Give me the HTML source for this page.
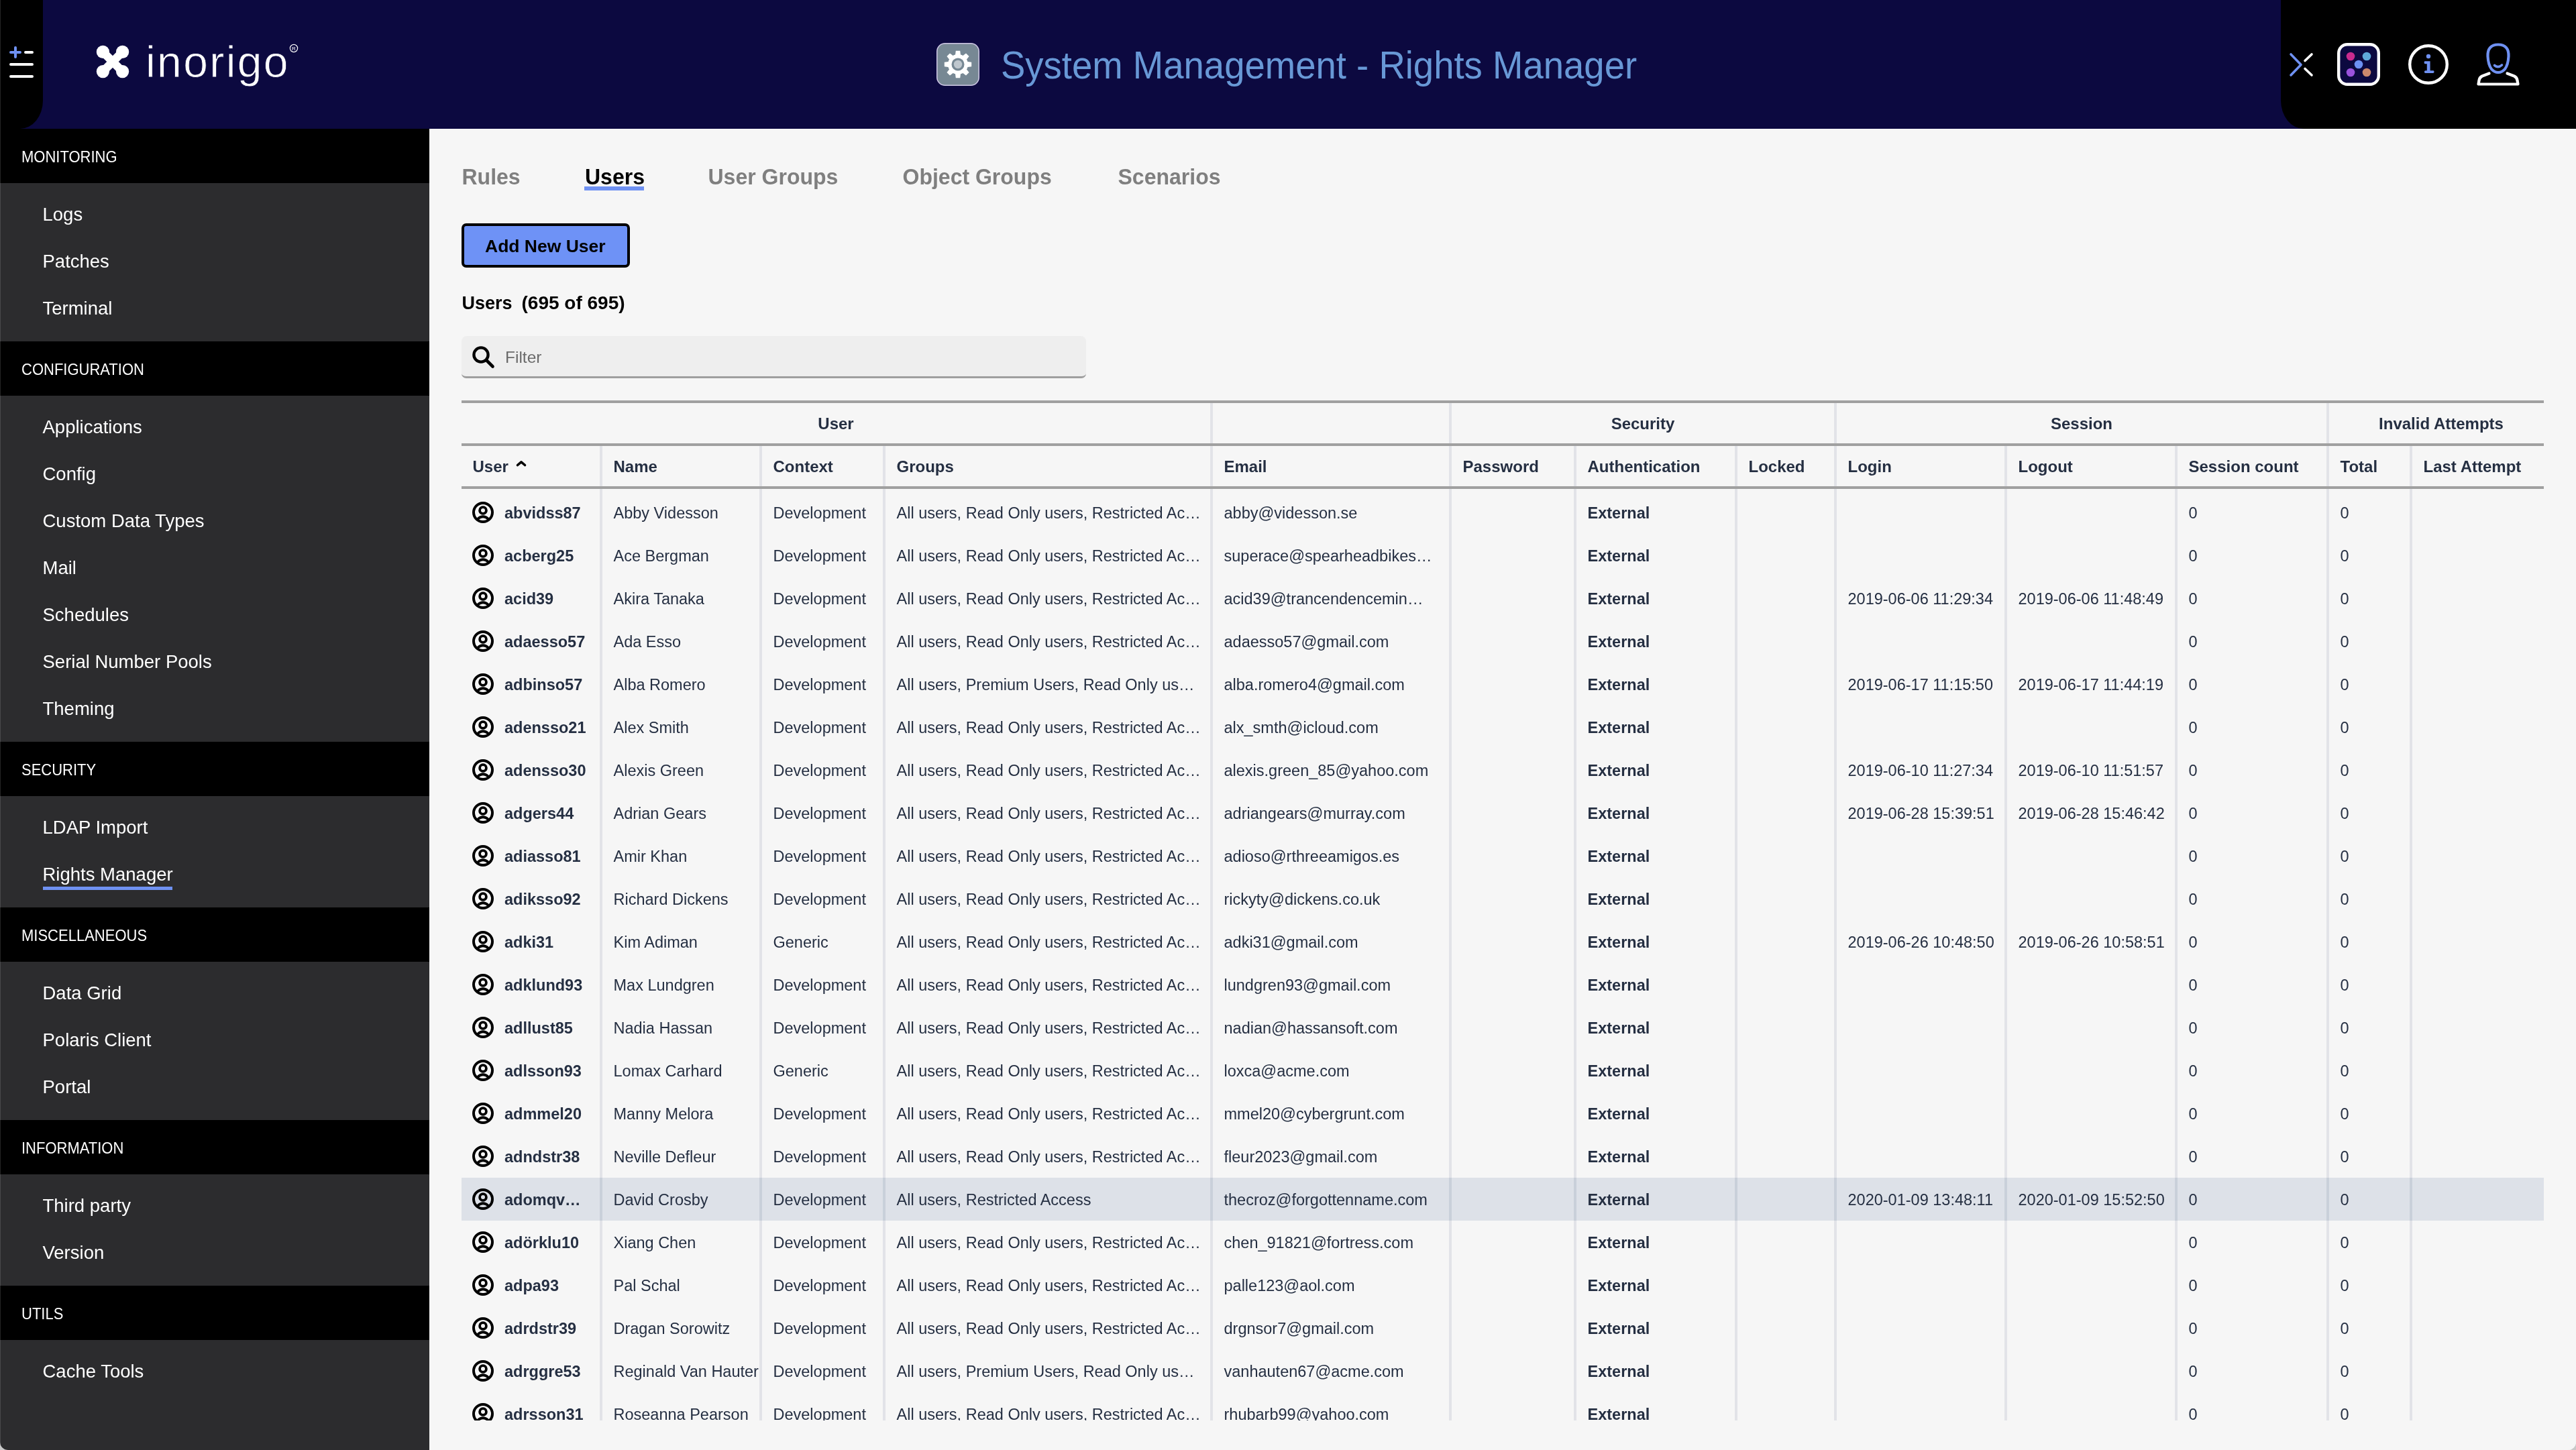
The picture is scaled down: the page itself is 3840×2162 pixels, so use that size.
<!DOCTYPE html>
<html><head><meta charset="utf-8"><title>System Management - Rights Manager</title>
<style>
html,body{margin:0;padding:0;}
body{width:3840px;height:2162px;overflow:hidden;position:relative;background:#c9c9c9;font-family:"Liberation Sans",sans-serif;}
.r{position:absolute;}
.t{position:absolute;white-space:nowrap;}
</style></head><body>
<div id="app" style="position:absolute;left:0;top:0;width:3840px;height:2162px;will-change:transform;overflow:hidden;border-radius:0 0 12px 12px;background:#f6f6f6">
<div class="r" style="left:0px;top:0px;width:3840px;height:192px;background:#0c0940;"></div>
<div class="r" style="left:0px;top:0px;width:64px;height:192px;background:#000;border-bottom-right-radius:34px 42px;"></div>
<div class="r" style="left:3400px;top:0px;width:440px;height:192px;background:#000;border-bottom-left-radius:34px 42px;"></div>
<svg class="r" style="left:0;top:0" width="64" height="192" viewBox="0 0 64 192">
<g stroke-linecap="round" stroke-width="4" fill="none">
<path d="M16 78H30M23 71V85" stroke="#6f91f2"/>
<path d="M38 78H48M16 96H48M16 114H48" stroke="#fff"/>
</g></svg>
<svg class="r" style="left:140px;top:64px" width="56" height="56" viewBox="0 0 56 56">
<g fill="#fff">
<circle cx="13.4" cy="13.4" r="9.6"/><circle cx="42.6" cy="13.4" r="9.6"/>
<circle cx="13.4" cy="42.6" r="9.6"/><circle cx="42.6" cy="42.6" r="9.6"/>
<path d="M13.4 13.4L42.6 42.6M42.6 13.4L13.4 42.6" stroke="#fff" stroke-width="12.5"/>
</g></svg>
<div class="t " style="left:217.0px;top:59.13px;font-size:66px;line-height:66px;color:#fff;letter-spacing:2.4px;-webkit-text-stroke:0.8px #0c0940;">inorigo</div>
<svg class="r" style="left:430px;top:64px" width="16" height="16" viewBox="0 0 16 16">
<circle cx="8" cy="8" r="5.6" fill="none" stroke="#fff" stroke-width="1.2"/>
<text x="8" y="10.8" font-size="8" font-family="Liberation Sans" fill="#fff" text-anchor="middle">R</text></svg>
<svg class="r" style="left:1396px;top:64px" width="64" height="64" viewBox="0 0 64 64">
<rect x="0.75" y="0.75" width="62.5" height="62.5" rx="12" fill="#778894" stroke="#cfc8e6" stroke-width="1.5"/>
<g transform="translate(32 32)" fill="#fff">
<path d="M-4.4 -11L-3.2 -20.2H3.2L4.4 -11Z" transform="rotate(0)"/>
<path d="M-4.4 -11L-3.2 -20.2H3.2L4.4 -11Z" transform="rotate(45)"/>
<path d="M-4.4 -11L-3.2 -20.2H3.2L4.4 -11Z" transform="rotate(90)"/>
<path d="M-4.4 -11L-3.2 -20.2H3.2L4.4 -11Z" transform="rotate(135)"/>
<path d="M-4.4 -11L-3.2 -20.2H3.2L4.4 -11Z" transform="rotate(180)"/>
<path d="M-4.4 -11L-3.2 -20.2H3.2L4.4 -11Z" transform="rotate(225)"/>
<path d="M-4.4 -11L-3.2 -20.2H3.2L4.4 -11Z" transform="rotate(270)"/>
<path d="M-4.4 -11L-3.2 -20.2H3.2L4.4 -11Z" transform="rotate(315)"/>
<circle r="15"/>
</g>
<circle cx="32" cy="32" r="9.5" fill="#778894"/>
<circle cx="32" cy="32" r="6.2" fill="#bfc7ce"/>
</svg>
<div class="t " style="left:1492.0px;top:71.87px;font-size:54.5px;line-height:54.5px;color:#6898d6;transform:scaleY(1.04);transform-origin:0 46.13px;">System Management - Rights Manager</div>
<svg class="r" style="left:3400px;top:60px" width="440" height="80" viewBox="3400 60 440 80">
<g fill="none" stroke-linecap="round" stroke-linejoin="round">
<path d="M3415 81L3430 96.5L3415 112" stroke="#6f91f2" stroke-width="3.6"/>
<path d="M3446 81L3436 90.5M3436 102.5L3446 112" stroke="#fff" stroke-width="3.6"/>
<rect x="3486.2" y="66.2" width="59.6" height="59.6" rx="13" fill="#0c0940" stroke="#fff" stroke-width="4.4"/>
<circle cx="3620" cy="96" r="27.8" stroke="#fff" stroke-width="4.4"/>
<path d="M3710 64.5" />
<path d="M3724 66.5C3713 66.5 3708 73 3708.5 84C3709 93 3711 99 3714 103C3717 106.5 3720.5 108 3724 108C3727.5 108 3731 106.5 3734 103C3737 99 3739 93 3739.5 84C3740 73 3735 66.5 3724 66.5Z" stroke="#6f91f2" stroke-width="4.2"/>
<path d="M3718.5 97.5Q3724 102 3729.5 97" stroke="#6f91f2" stroke-width="3.6"/>
<path d="M3710.5 109.5L3700 113.5Q3696 115.5 3695.5 120L3694.5 125.5H3753.5L3752.5 120Q3752 115.5 3748 113.5L3737.5 109.5" stroke="#fff" stroke-width="4.2"/>
</g>
<g>
<circle cx="3504" cy="84" r="6.3" fill="#c92b8e"/>
<circle cx="3528" cy="84" r="6.3" fill="#5fa9da"/>
<circle cx="3516" cy="96" r="6.3" fill="#6c90f2"/>
<circle cx="3504" cy="108" r="6.3" fill="#9a52dc"/>
<circle cx="3528" cy="108" r="6.3" fill="#cb886c"/>
<circle cx="3620" cy="84" r="3.2" fill="#6f91f2"/>
<path d="M3614.5 91.2H3622.6V105.2H3627.2Q3628.6 105.4 3628.6 107.2Q3628.4 109 3627 109H3615.6Q3614 109 3613.8 107.2Q3614 105.4 3615.6 105.2H3617.8V95.2H3615.2Q3613.6 95 3613.6 93.2Q3613.8 91.4 3614.5 91.2Z" fill="#6f91f2"/>
</g>
</svg>
<div class="r" style="left:0px;top:192px;width:640px;height:1970px;background:#2c2c2e;"></div>
<div class="r" style="left:0px;top:192px;width:640px;height:81px;background:#000;"></div>
<div class="t " style="left:32.0px;top:223.88px;font-size:22px;line-height:22px;color:#fff;transform:scaleY(1.12);transform-origin:0 18.62px;">MONITORING</div>
<div class="t " style="left:63.5px;top:306.22px;font-size:27.5px;line-height:27.5px;color:#fff;">Logs</div>
<div class="t " style="left:63.5px;top:376.22px;font-size:27.5px;line-height:27.5px;color:#fff;">Patches</div>
<div class="t " style="left:63.5px;top:446.22px;font-size:27.5px;line-height:27.5px;color:#fff;">Terminal</div>
<div class="r" style="left:0px;top:509px;width:640px;height:81px;background:#000;"></div>
<div class="t " style="left:32.0px;top:540.88px;font-size:22px;line-height:22px;color:#fff;transform:scaleY(1.12);transform-origin:0 18.62px;">CONFIGURATION</div>
<div class="t " style="left:63.5px;top:623.22px;font-size:27.5px;line-height:27.5px;color:#fff;">Applications</div>
<div class="t " style="left:63.5px;top:693.22px;font-size:27.5px;line-height:27.5px;color:#fff;">Config</div>
<div class="t " style="left:63.5px;top:763.22px;font-size:27.5px;line-height:27.5px;color:#fff;">Custom Data Types</div>
<div class="t " style="left:63.5px;top:833.22px;font-size:27.5px;line-height:27.5px;color:#fff;">Mail</div>
<div class="t " style="left:63.5px;top:903.22px;font-size:27.5px;line-height:27.5px;color:#fff;">Schedules</div>
<div class="t " style="left:63.5px;top:973.22px;font-size:27.5px;line-height:27.5px;color:#fff;">Serial Number Pools</div>
<div class="t " style="left:63.5px;top:1043.22px;font-size:27.5px;line-height:27.5px;color:#fff;">Theming</div>
<div class="r" style="left:0px;top:1106px;width:640px;height:81px;background:#000;"></div>
<div class="t " style="left:32.0px;top:1137.88px;font-size:22px;line-height:22px;color:#fff;transform:scaleY(1.12);transform-origin:0 18.62px;">SECURITY</div>
<div class="t " style="left:63.5px;top:1220.22px;font-size:27.5px;line-height:27.5px;color:#fff;">LDAP Import</div>
<div class="t " style="left:63.5px;top:1290.22px;font-size:27.5px;line-height:27.5px;color:#fff;">Rights Manager</div>
<div class="r" style="left:64px;top:1321.5px;width:193px;height:5px;background:#6f91f2;"></div>
<div class="r" style="left:0px;top:1353px;width:640px;height:81px;background:#000;"></div>
<div class="t " style="left:32.0px;top:1384.88px;font-size:22px;line-height:22px;color:#fff;transform:scaleY(1.12);transform-origin:0 18.62px;">MISCELLANEOUS</div>
<div class="t " style="left:63.5px;top:1467.22px;font-size:27.5px;line-height:27.5px;color:#fff;">Data Grid</div>
<div class="t " style="left:63.5px;top:1537.22px;font-size:27.5px;line-height:27.5px;color:#fff;">Polaris Client</div>
<div class="t " style="left:63.5px;top:1607.22px;font-size:27.5px;line-height:27.5px;color:#fff;">Portal</div>
<div class="r" style="left:0px;top:1670px;width:640px;height:81px;background:#000;"></div>
<div class="t " style="left:32.0px;top:1701.88px;font-size:22px;line-height:22px;color:#fff;transform:scaleY(1.12);transform-origin:0 18.62px;">INFORMATION</div>
<div class="t " style="left:63.5px;top:1784.22px;font-size:27.5px;line-height:27.5px;color:#fff;">Third party</div>
<div class="t " style="left:63.5px;top:1854.22px;font-size:27.5px;line-height:27.5px;color:#fff;">Version</div>
<div class="r" style="left:0px;top:1917px;width:640px;height:81px;background:#000;"></div>
<div class="t " style="left:32.0px;top:1948.88px;font-size:22px;line-height:22px;color:#fff;transform:scaleY(1.12);transform-origin:0 18.62px;">UTILS</div>
<div class="t " style="left:63.5px;top:2031.22px;font-size:27.5px;line-height:27.5px;color:#fff;">Cache Tools</div>
<div class="r" style="left:640px;top:192px;width:3200px;height:1970px;background:#f6f6f6;"></div>
<div class="t " style="left:688.5px;top:247.91px;font-size:32px;line-height:32px;font-weight:700;color:#7f7f7f;transform:scaleY(1.05);transform-origin:0 27.09px;">Rules</div>
<div class="t " style="left:872.0px;top:247.91px;font-size:32px;line-height:32px;font-weight:700;color:#000;transform:scaleY(1.05);transform-origin:0 27.09px;">Users</div>
<div class="t " style="left:1055.5px;top:247.91px;font-size:32px;line-height:32px;font-weight:700;color:#7f7f7f;transform:scaleY(1.05);transform-origin:0 27.09px;">User Groups</div>
<div class="t " style="left:1345.5px;top:247.91px;font-size:32px;line-height:32px;font-weight:700;color:#7f7f7f;transform:scaleY(1.05);transform-origin:0 27.09px;">Object Groups</div>
<div class="t " style="left:1666.5px;top:247.91px;font-size:32px;line-height:32px;font-weight:700;color:#7f7f7f;transform:scaleY(1.05);transform-origin:0 27.09px;">Scenarios</div>
<div class="r" style="left:871px;top:278px;width:89px;height:6px;background:#6f91f2;"></div>
<div class="r" style="left:688px;top:333px;width:251px;height:66px;box-sizing:border-box;border:4px solid #000;border-radius:7px;background:#6e92f6"></div>
<div class="t " style="left:723.0px;top:353.57px;font-size:26.5px;line-height:26.5px;font-weight:700;color:#000;">Add New User</div>
<div class="t " style="left:688.5px;top:439.14px;font-size:27px;line-height:27px;font-weight:700;color:#000;">Users</div>
<div class="t " style="left:777.5px;top:438.30px;font-size:28px;line-height:28px;font-weight:700;color:#000;">(695 of 695)</div>
<div class="r" style="left:688px;top:501px;width:931px;height:63px;box-sizing:border-box;background:#eeeeee;border-bottom:3.5px solid #9e9e9e;border-radius:8px 8px 7px 7px"></div>
<svg class="r" style="left:700px;top:512px" width="40" height="40" viewBox="700 512 40 40">
<g fill="none" stroke="#000" stroke-linecap="round"><circle cx="717" cy="529" r="10.6" stroke-width="4.3"/><path d="M726 538L734.5 546.5" stroke-width="4.6"/></g></svg>
<div class="t " style="left:753.0px;top:521.26px;font-size:24.5px;line-height:24.5px;color:#6a6a6a;">Filter</div>
<div class="r" style="left:688px;top:1756px;width:3104px;height:64px;background:#dde1e8;"></div>
<div class="r" style="left:1804px;top:601px;width:4px;height:60px;background:#e2e3e8;"></div>
<div class="r" style="left:2160px;top:601px;width:4px;height:60px;background:#e2e3e8;"></div>
<div class="r" style="left:2734px;top:601px;width:4px;height:60px;background:#e2e3e8;"></div>
<div class="r" style="left:3468px;top:601px;width:4px;height:60px;background:#e2e3e8;"></div>
<div class="r" style="left:894px;top:665px;width:4px;height:1453px;background:#e2e3e8;"></div>
<div class="r" style="left:894px;top:1756px;width:4px;height:64px;background:#c9d0da;"></div>
<div class="r" style="left:1132px;top:665px;width:4px;height:1453px;background:#e2e3e8;"></div>
<div class="r" style="left:1132px;top:1756px;width:4px;height:64px;background:#c9d0da;"></div>
<div class="r" style="left:1316px;top:665px;width:4px;height:1453px;background:#e2e3e8;"></div>
<div class="r" style="left:1316px;top:1756px;width:4px;height:64px;background:#c9d0da;"></div>
<div class="r" style="left:1804px;top:665px;width:4px;height:1453px;background:#e2e3e8;"></div>
<div class="r" style="left:1804px;top:1756px;width:4px;height:64px;background:#c9d0da;"></div>
<div class="r" style="left:2160px;top:665px;width:4px;height:1453px;background:#e2e3e8;"></div>
<div class="r" style="left:2160px;top:1756px;width:4px;height:64px;background:#c9d0da;"></div>
<div class="r" style="left:2346px;top:665px;width:4px;height:1453px;background:#e2e3e8;"></div>
<div class="r" style="left:2346px;top:1756px;width:4px;height:64px;background:#c9d0da;"></div>
<div class="r" style="left:2586px;top:665px;width:4px;height:1453px;background:#e2e3e8;"></div>
<div class="r" style="left:2586px;top:1756px;width:4px;height:64px;background:#c9d0da;"></div>
<div class="r" style="left:2734px;top:665px;width:4px;height:1453px;background:#e2e3e8;"></div>
<div class="r" style="left:2734px;top:1756px;width:4px;height:64px;background:#c9d0da;"></div>
<div class="r" style="left:2988px;top:665px;width:4px;height:1453px;background:#e2e3e8;"></div>
<div class="r" style="left:2988px;top:1756px;width:4px;height:64px;background:#c9d0da;"></div>
<div class="r" style="left:3242px;top:665px;width:4px;height:1453px;background:#e2e3e8;"></div>
<div class="r" style="left:3242px;top:1756px;width:4px;height:64px;background:#c9d0da;"></div>
<div class="r" style="left:3468px;top:665px;width:4px;height:1453px;background:#e2e3e8;"></div>
<div class="r" style="left:3468px;top:1756px;width:4px;height:64px;background:#c9d0da;"></div>
<div class="r" style="left:3592px;top:665px;width:4px;height:1453px;background:#e2e3e8;"></div>
<div class="r" style="left:3592px;top:1756px;width:4px;height:64px;background:#c9d0da;"></div>
<div class="r" style="left:688px;top:597px;width:3104px;height:4px;background:#a0a0a0;"></div>
<div class="r" style="left:688px;top:661px;width:3104px;height:4px;background:#a0a0a0;"></div>
<div class="r" style="left:688px;top:725px;width:3104px;height:4px;background:#a0a0a0;"></div>
<div class="t " style="left:846.0px;width:800px;text-align:center;top:619.68px;font-size:24px;line-height:24px;font-weight:700;color:#252f42;">User</div>
<div class="t " style="left:2049.0px;width:800px;text-align:center;top:619.68px;font-size:24px;line-height:24px;font-weight:700;color:#252f42;">Security</div>
<div class="t " style="left:2703.0px;width:800px;text-align:center;top:619.68px;font-size:24px;line-height:24px;font-weight:700;color:#252f42;">Session</div>
<div class="t " style="left:3239.0px;width:800px;text-align:center;top:619.68px;font-size:24px;line-height:24px;font-weight:700;color:#252f42;">Invalid Attempts</div>
<div class="t " style="left:704.5px;top:683.68px;font-size:24px;line-height:24px;font-weight:700;color:#252f42;">User</div>
<div class="t " style="left:914.5px;top:683.68px;font-size:24px;line-height:24px;font-weight:700;color:#252f42;">Name</div>
<div class="t " style="left:1152.5px;top:683.68px;font-size:24px;line-height:24px;font-weight:700;color:#252f42;">Context</div>
<div class="t " style="left:1336.5px;top:683.68px;font-size:24px;line-height:24px;font-weight:700;color:#252f42;">Groups</div>
<div class="t " style="left:1824.5px;top:683.68px;font-size:24px;line-height:24px;font-weight:700;color:#252f42;">Email</div>
<div class="t " style="left:2180.5px;top:683.68px;font-size:24px;line-height:24px;font-weight:700;color:#252f42;">Password</div>
<div class="t " style="left:2366.5px;top:683.68px;font-size:24px;line-height:24px;font-weight:700;color:#252f42;">Authentication</div>
<div class="t " style="left:2606.5px;top:683.68px;font-size:24px;line-height:24px;font-weight:700;color:#252f42;">Locked</div>
<div class="t " style="left:2754.5px;top:683.68px;font-size:24px;line-height:24px;font-weight:700;color:#252f42;">Login</div>
<div class="t " style="left:3008.5px;top:683.68px;font-size:24px;line-height:24px;font-weight:700;color:#252f42;">Logout</div>
<div class="t " style="left:3262.5px;top:683.68px;font-size:24px;line-height:24px;font-weight:700;color:#252f42;">Session count</div>
<div class="t " style="left:3488.5px;top:683.68px;font-size:24px;line-height:24px;font-weight:700;color:#252f42;">Total</div>
<div class="t " style="left:3612.5px;top:683.68px;font-size:24px;line-height:24px;font-weight:700;color:#252f42;">Last Attempt</div>
<svg class="r" style="left:764px;top:682px" width="26" height="18" viewBox="764 682 26 18"><path d="M771.5 693.5L777 688.8L782.5 693.5" fill="none" stroke="#000" stroke-width="3.6" stroke-linecap="round" stroke-linejoin="round"/></svg>
<div class="r" style="left:640px;top:732px;width:3200px;height:1386px;overflow:hidden">
<svg class="r" style="margin-left:-640px;margin-top:-732px;left:704px;top:748px" width="32" height="32" viewBox="0 0 32 32"><g fill="none" stroke="#000" stroke-width="4"><circle cx="16" cy="16" r="14"/><circle cx="16" cy="13" r="4.9" stroke-width="3.8"/><path d="M8 25.8Q16 18.6 24 25.8" stroke-width="3.8"/></g></svg>
<div class="t " style="margin-left:-640px;margin-top:-732px;left:752.0px;top:754.11px;font-size:23.5px;line-height:23.5px;font-weight:700;color:#252f42;">abvidss87</div>
<div class="t " style="margin-left:-640px;margin-top:-732px;left:914.5px;top:754.11px;font-size:23.5px;line-height:23.5px;color:#252f42;">Abby Videsson</div>
<div class="t " style="margin-left:-640px;margin-top:-732px;left:1152.5px;top:754.11px;font-size:23.5px;line-height:23.5px;color:#252f42;">Development</div>
<div class="t " style="margin-left:-640px;margin-top:-732px;left:1336.5px;top:754.11px;font-size:23.5px;line-height:23.5px;color:#252f42;">All users, Read Only users, Restricted Ac…</div>
<div class="t " style="margin-left:-640px;margin-top:-732px;left:1824.5px;top:754.11px;font-size:23.5px;line-height:23.5px;color:#252f42;">abby@videsson.se</div>
<div class="t " style="margin-left:-640px;margin-top:-732px;left:2366.5px;top:754.11px;font-size:23.5px;line-height:23.5px;font-weight:700;color:#252f42;">External</div>
<div class="t " style="margin-left:-640px;margin-top:-732px;left:3262.5px;top:754.11px;font-size:23.5px;line-height:23.5px;color:#252f42;">0</div>
<div class="t " style="margin-left:-640px;margin-top:-732px;left:3488.5px;top:754.11px;font-size:23.5px;line-height:23.5px;color:#252f42;">0</div>
<svg class="r" style="margin-left:-640px;margin-top:-732px;left:704px;top:812px" width="32" height="32" viewBox="0 0 32 32"><g fill="none" stroke="#000" stroke-width="4"><circle cx="16" cy="16" r="14"/><circle cx="16" cy="13" r="4.9" stroke-width="3.8"/><path d="M8 25.8Q16 18.6 24 25.8" stroke-width="3.8"/></g></svg>
<div class="t " style="margin-left:-640px;margin-top:-732px;left:752.0px;top:818.11px;font-size:23.5px;line-height:23.5px;font-weight:700;color:#252f42;">acberg25</div>
<div class="t " style="margin-left:-640px;margin-top:-732px;left:914.5px;top:818.11px;font-size:23.5px;line-height:23.5px;color:#252f42;">Ace Bergman</div>
<div class="t " style="margin-left:-640px;margin-top:-732px;left:1152.5px;top:818.11px;font-size:23.5px;line-height:23.5px;color:#252f42;">Development</div>
<div class="t " style="margin-left:-640px;margin-top:-732px;left:1336.5px;top:818.11px;font-size:23.5px;line-height:23.5px;color:#252f42;">All users, Read Only users, Restricted Ac…</div>
<div class="t " style="margin-left:-640px;margin-top:-732px;left:1824.5px;top:818.11px;font-size:23.5px;line-height:23.5px;color:#252f42;">superace@spearheadbikes…</div>
<div class="t " style="margin-left:-640px;margin-top:-732px;left:2366.5px;top:818.11px;font-size:23.5px;line-height:23.5px;font-weight:700;color:#252f42;">External</div>
<div class="t " style="margin-left:-640px;margin-top:-732px;left:3262.5px;top:818.11px;font-size:23.5px;line-height:23.5px;color:#252f42;">0</div>
<div class="t " style="margin-left:-640px;margin-top:-732px;left:3488.5px;top:818.11px;font-size:23.5px;line-height:23.5px;color:#252f42;">0</div>
<svg class="r" style="margin-left:-640px;margin-top:-732px;left:704px;top:876px" width="32" height="32" viewBox="0 0 32 32"><g fill="none" stroke="#000" stroke-width="4"><circle cx="16" cy="16" r="14"/><circle cx="16" cy="13" r="4.9" stroke-width="3.8"/><path d="M8 25.8Q16 18.6 24 25.8" stroke-width="3.8"/></g></svg>
<div class="t " style="margin-left:-640px;margin-top:-732px;left:752.0px;top:882.11px;font-size:23.5px;line-height:23.5px;font-weight:700;color:#252f42;">acid39</div>
<div class="t " style="margin-left:-640px;margin-top:-732px;left:914.5px;top:882.11px;font-size:23.5px;line-height:23.5px;color:#252f42;">Akira Tanaka</div>
<div class="t " style="margin-left:-640px;margin-top:-732px;left:1152.5px;top:882.11px;font-size:23.5px;line-height:23.5px;color:#252f42;">Development</div>
<div class="t " style="margin-left:-640px;margin-top:-732px;left:1336.5px;top:882.11px;font-size:23.5px;line-height:23.5px;color:#252f42;">All users, Read Only users, Restricted Ac…</div>
<div class="t " style="margin-left:-640px;margin-top:-732px;left:1824.5px;top:882.11px;font-size:23.5px;line-height:23.5px;color:#252f42;">acid39@trancendencemin…</div>
<div class="t " style="margin-left:-640px;margin-top:-732px;left:2366.5px;top:882.11px;font-size:23.5px;line-height:23.5px;font-weight:700;color:#252f42;">External</div>
<div class="t " style="margin-left:-640px;margin-top:-732px;left:2754.5px;top:882.11px;font-size:23.5px;line-height:23.5px;color:#252f42;">2019-06-06 11:29:34</div>
<div class="t " style="margin-left:-640px;margin-top:-732px;left:3008.5px;top:882.11px;font-size:23.5px;line-height:23.5px;color:#252f42;">2019-06-06 11:48:49</div>
<div class="t " style="margin-left:-640px;margin-top:-732px;left:3262.5px;top:882.11px;font-size:23.5px;line-height:23.5px;color:#252f42;">0</div>
<div class="t " style="margin-left:-640px;margin-top:-732px;left:3488.5px;top:882.11px;font-size:23.5px;line-height:23.5px;color:#252f42;">0</div>
<svg class="r" style="margin-left:-640px;margin-top:-732px;left:704px;top:940px" width="32" height="32" viewBox="0 0 32 32"><g fill="none" stroke="#000" stroke-width="4"><circle cx="16" cy="16" r="14"/><circle cx="16" cy="13" r="4.9" stroke-width="3.8"/><path d="M8 25.8Q16 18.6 24 25.8" stroke-width="3.8"/></g></svg>
<div class="t " style="margin-left:-640px;margin-top:-732px;left:752.0px;top:946.11px;font-size:23.5px;line-height:23.5px;font-weight:700;color:#252f42;">adaesso57</div>
<div class="t " style="margin-left:-640px;margin-top:-732px;left:914.5px;top:946.11px;font-size:23.5px;line-height:23.5px;color:#252f42;">Ada Esso</div>
<div class="t " style="margin-left:-640px;margin-top:-732px;left:1152.5px;top:946.11px;font-size:23.5px;line-height:23.5px;color:#252f42;">Development</div>
<div class="t " style="margin-left:-640px;margin-top:-732px;left:1336.5px;top:946.11px;font-size:23.5px;line-height:23.5px;color:#252f42;">All users, Read Only users, Restricted Ac…</div>
<div class="t " style="margin-left:-640px;margin-top:-732px;left:1824.5px;top:946.11px;font-size:23.5px;line-height:23.5px;color:#252f42;">adaesso57@gmail.com</div>
<div class="t " style="margin-left:-640px;margin-top:-732px;left:2366.5px;top:946.11px;font-size:23.5px;line-height:23.5px;font-weight:700;color:#252f42;">External</div>
<div class="t " style="margin-left:-640px;margin-top:-732px;left:3262.5px;top:946.11px;font-size:23.5px;line-height:23.5px;color:#252f42;">0</div>
<div class="t " style="margin-left:-640px;margin-top:-732px;left:3488.5px;top:946.11px;font-size:23.5px;line-height:23.5px;color:#252f42;">0</div>
<svg class="r" style="margin-left:-640px;margin-top:-732px;left:704px;top:1004px" width="32" height="32" viewBox="0 0 32 32"><g fill="none" stroke="#000" stroke-width="4"><circle cx="16" cy="16" r="14"/><circle cx="16" cy="13" r="4.9" stroke-width="3.8"/><path d="M8 25.8Q16 18.6 24 25.8" stroke-width="3.8"/></g></svg>
<div class="t " style="margin-left:-640px;margin-top:-732px;left:752.0px;top:1010.11px;font-size:23.5px;line-height:23.5px;font-weight:700;color:#252f42;">adbinso57</div>
<div class="t " style="margin-left:-640px;margin-top:-732px;left:914.5px;top:1010.11px;font-size:23.5px;line-height:23.5px;color:#252f42;">Alba Romero</div>
<div class="t " style="margin-left:-640px;margin-top:-732px;left:1152.5px;top:1010.11px;font-size:23.5px;line-height:23.5px;color:#252f42;">Development</div>
<div class="t " style="margin-left:-640px;margin-top:-732px;left:1336.5px;top:1010.11px;font-size:23.5px;line-height:23.5px;color:#252f42;">All users, Premium Users, Read Only us…</div>
<div class="t " style="margin-left:-640px;margin-top:-732px;left:1824.5px;top:1010.11px;font-size:23.5px;line-height:23.5px;color:#252f42;">alba.romero4@gmail.com</div>
<div class="t " style="margin-left:-640px;margin-top:-732px;left:2366.5px;top:1010.11px;font-size:23.5px;line-height:23.5px;font-weight:700;color:#252f42;">External</div>
<div class="t " style="margin-left:-640px;margin-top:-732px;left:2754.5px;top:1010.11px;font-size:23.5px;line-height:23.5px;color:#252f42;">2019-06-17 11:15:50</div>
<div class="t " style="margin-left:-640px;margin-top:-732px;left:3008.5px;top:1010.11px;font-size:23.5px;line-height:23.5px;color:#252f42;">2019-06-17 11:44:19</div>
<div class="t " style="margin-left:-640px;margin-top:-732px;left:3262.5px;top:1010.11px;font-size:23.5px;line-height:23.5px;color:#252f42;">0</div>
<div class="t " style="margin-left:-640px;margin-top:-732px;left:3488.5px;top:1010.11px;font-size:23.5px;line-height:23.5px;color:#252f42;">0</div>
<svg class="r" style="margin-left:-640px;margin-top:-732px;left:704px;top:1068px" width="32" height="32" viewBox="0 0 32 32"><g fill="none" stroke="#000" stroke-width="4"><circle cx="16" cy="16" r="14"/><circle cx="16" cy="13" r="4.9" stroke-width="3.8"/><path d="M8 25.8Q16 18.6 24 25.8" stroke-width="3.8"/></g></svg>
<div class="t " style="margin-left:-640px;margin-top:-732px;left:752.0px;top:1074.11px;font-size:23.5px;line-height:23.5px;font-weight:700;color:#252f42;">adensso21</div>
<div class="t " style="margin-left:-640px;margin-top:-732px;left:914.5px;top:1074.11px;font-size:23.5px;line-height:23.5px;color:#252f42;">Alex Smith</div>
<div class="t " style="margin-left:-640px;margin-top:-732px;left:1152.5px;top:1074.11px;font-size:23.5px;line-height:23.5px;color:#252f42;">Development</div>
<div class="t " style="margin-left:-640px;margin-top:-732px;left:1336.5px;top:1074.11px;font-size:23.5px;line-height:23.5px;color:#252f42;">All users, Read Only users, Restricted Ac…</div>
<div class="t " style="margin-left:-640px;margin-top:-732px;left:1824.5px;top:1074.11px;font-size:23.5px;line-height:23.5px;color:#252f42;">alx_smth@icloud.com</div>
<div class="t " style="margin-left:-640px;margin-top:-732px;left:2366.5px;top:1074.11px;font-size:23.5px;line-height:23.5px;font-weight:700;color:#252f42;">External</div>
<div class="t " style="margin-left:-640px;margin-top:-732px;left:3262.5px;top:1074.11px;font-size:23.5px;line-height:23.5px;color:#252f42;">0</div>
<div class="t " style="margin-left:-640px;margin-top:-732px;left:3488.5px;top:1074.11px;font-size:23.5px;line-height:23.5px;color:#252f42;">0</div>
<svg class="r" style="margin-left:-640px;margin-top:-732px;left:704px;top:1132px" width="32" height="32" viewBox="0 0 32 32"><g fill="none" stroke="#000" stroke-width="4"><circle cx="16" cy="16" r="14"/><circle cx="16" cy="13" r="4.9" stroke-width="3.8"/><path d="M8 25.8Q16 18.6 24 25.8" stroke-width="3.8"/></g></svg>
<div class="t " style="margin-left:-640px;margin-top:-732px;left:752.0px;top:1138.11px;font-size:23.5px;line-height:23.5px;font-weight:700;color:#252f42;">adensso30</div>
<div class="t " style="margin-left:-640px;margin-top:-732px;left:914.5px;top:1138.11px;font-size:23.5px;line-height:23.5px;color:#252f42;">Alexis Green</div>
<div class="t " style="margin-left:-640px;margin-top:-732px;left:1152.5px;top:1138.11px;font-size:23.5px;line-height:23.5px;color:#252f42;">Development</div>
<div class="t " style="margin-left:-640px;margin-top:-732px;left:1336.5px;top:1138.11px;font-size:23.5px;line-height:23.5px;color:#252f42;">All users, Read Only users, Restricted Ac…</div>
<div class="t " style="margin-left:-640px;margin-top:-732px;left:1824.5px;top:1138.11px;font-size:23.5px;line-height:23.5px;color:#252f42;">alexis.green_85@yahoo.com</div>
<div class="t " style="margin-left:-640px;margin-top:-732px;left:2366.5px;top:1138.11px;font-size:23.5px;line-height:23.5px;font-weight:700;color:#252f42;">External</div>
<div class="t " style="margin-left:-640px;margin-top:-732px;left:2754.5px;top:1138.11px;font-size:23.5px;line-height:23.5px;color:#252f42;">2019-06-10 11:27:34</div>
<div class="t " style="margin-left:-640px;margin-top:-732px;left:3008.5px;top:1138.11px;font-size:23.5px;line-height:23.5px;color:#252f42;">2019-06-10 11:51:57</div>
<div class="t " style="margin-left:-640px;margin-top:-732px;left:3262.5px;top:1138.11px;font-size:23.5px;line-height:23.5px;color:#252f42;">0</div>
<div class="t " style="margin-left:-640px;margin-top:-732px;left:3488.5px;top:1138.11px;font-size:23.5px;line-height:23.5px;color:#252f42;">0</div>
<svg class="r" style="margin-left:-640px;margin-top:-732px;left:704px;top:1196px" width="32" height="32" viewBox="0 0 32 32"><g fill="none" stroke="#000" stroke-width="4"><circle cx="16" cy="16" r="14"/><circle cx="16" cy="13" r="4.9" stroke-width="3.8"/><path d="M8 25.8Q16 18.6 24 25.8" stroke-width="3.8"/></g></svg>
<div class="t " style="margin-left:-640px;margin-top:-732px;left:752.0px;top:1202.11px;font-size:23.5px;line-height:23.5px;font-weight:700;color:#252f42;">adgers44</div>
<div class="t " style="margin-left:-640px;margin-top:-732px;left:914.5px;top:1202.11px;font-size:23.5px;line-height:23.5px;color:#252f42;">Adrian Gears</div>
<div class="t " style="margin-left:-640px;margin-top:-732px;left:1152.5px;top:1202.11px;font-size:23.5px;line-height:23.5px;color:#252f42;">Development</div>
<div class="t " style="margin-left:-640px;margin-top:-732px;left:1336.5px;top:1202.11px;font-size:23.5px;line-height:23.5px;color:#252f42;">All users, Read Only users, Restricted Ac…</div>
<div class="t " style="margin-left:-640px;margin-top:-732px;left:1824.5px;top:1202.11px;font-size:23.5px;line-height:23.5px;color:#252f42;">adriangears@murray.com</div>
<div class="t " style="margin-left:-640px;margin-top:-732px;left:2366.5px;top:1202.11px;font-size:23.5px;line-height:23.5px;font-weight:700;color:#252f42;">External</div>
<div class="t " style="margin-left:-640px;margin-top:-732px;left:2754.5px;top:1202.11px;font-size:23.5px;line-height:23.5px;color:#252f42;">2019-06-28 15:39:51</div>
<div class="t " style="margin-left:-640px;margin-top:-732px;left:3008.5px;top:1202.11px;font-size:23.5px;line-height:23.5px;color:#252f42;">2019-06-28 15:46:42</div>
<div class="t " style="margin-left:-640px;margin-top:-732px;left:3262.5px;top:1202.11px;font-size:23.5px;line-height:23.5px;color:#252f42;">0</div>
<div class="t " style="margin-left:-640px;margin-top:-732px;left:3488.5px;top:1202.11px;font-size:23.5px;line-height:23.5px;color:#252f42;">0</div>
<svg class="r" style="margin-left:-640px;margin-top:-732px;left:704px;top:1260px" width="32" height="32" viewBox="0 0 32 32"><g fill="none" stroke="#000" stroke-width="4"><circle cx="16" cy="16" r="14"/><circle cx="16" cy="13" r="4.9" stroke-width="3.8"/><path d="M8 25.8Q16 18.6 24 25.8" stroke-width="3.8"/></g></svg>
<div class="t " style="margin-left:-640px;margin-top:-732px;left:752.0px;top:1266.11px;font-size:23.5px;line-height:23.5px;font-weight:700;color:#252f42;">adiasso81</div>
<div class="t " style="margin-left:-640px;margin-top:-732px;left:914.5px;top:1266.11px;font-size:23.5px;line-height:23.5px;color:#252f42;">Amir Khan</div>
<div class="t " style="margin-left:-640px;margin-top:-732px;left:1152.5px;top:1266.11px;font-size:23.5px;line-height:23.5px;color:#252f42;">Development</div>
<div class="t " style="margin-left:-640px;margin-top:-732px;left:1336.5px;top:1266.11px;font-size:23.5px;line-height:23.5px;color:#252f42;">All users, Read Only users, Restricted Ac…</div>
<div class="t " style="margin-left:-640px;margin-top:-732px;left:1824.5px;top:1266.11px;font-size:23.5px;line-height:23.5px;color:#252f42;">adioso@rthreeamigos.es</div>
<div class="t " style="margin-left:-640px;margin-top:-732px;left:2366.5px;top:1266.11px;font-size:23.5px;line-height:23.5px;font-weight:700;color:#252f42;">External</div>
<div class="t " style="margin-left:-640px;margin-top:-732px;left:3262.5px;top:1266.11px;font-size:23.5px;line-height:23.5px;color:#252f42;">0</div>
<div class="t " style="margin-left:-640px;margin-top:-732px;left:3488.5px;top:1266.11px;font-size:23.5px;line-height:23.5px;color:#252f42;">0</div>
<svg class="r" style="margin-left:-640px;margin-top:-732px;left:704px;top:1324px" width="32" height="32" viewBox="0 0 32 32"><g fill="none" stroke="#000" stroke-width="4"><circle cx="16" cy="16" r="14"/><circle cx="16" cy="13" r="4.9" stroke-width="3.8"/><path d="M8 25.8Q16 18.6 24 25.8" stroke-width="3.8"/></g></svg>
<div class="t " style="margin-left:-640px;margin-top:-732px;left:752.0px;top:1330.11px;font-size:23.5px;line-height:23.5px;font-weight:700;color:#252f42;">adiksso92</div>
<div class="t " style="margin-left:-640px;margin-top:-732px;left:914.5px;top:1330.11px;font-size:23.5px;line-height:23.5px;color:#252f42;">Richard Dickens</div>
<div class="t " style="margin-left:-640px;margin-top:-732px;left:1152.5px;top:1330.11px;font-size:23.5px;line-height:23.5px;color:#252f42;">Development</div>
<div class="t " style="margin-left:-640px;margin-top:-732px;left:1336.5px;top:1330.11px;font-size:23.5px;line-height:23.5px;color:#252f42;">All users, Read Only users, Restricted Ac…</div>
<div class="t " style="margin-left:-640px;margin-top:-732px;left:1824.5px;top:1330.11px;font-size:23.5px;line-height:23.5px;color:#252f42;">rickyty@dickens.co.uk</div>
<div class="t " style="margin-left:-640px;margin-top:-732px;left:2366.5px;top:1330.11px;font-size:23.5px;line-height:23.5px;font-weight:700;color:#252f42;">External</div>
<div class="t " style="margin-left:-640px;margin-top:-732px;left:3262.5px;top:1330.11px;font-size:23.5px;line-height:23.5px;color:#252f42;">0</div>
<div class="t " style="margin-left:-640px;margin-top:-732px;left:3488.5px;top:1330.11px;font-size:23.5px;line-height:23.5px;color:#252f42;">0</div>
<svg class="r" style="margin-left:-640px;margin-top:-732px;left:704px;top:1388px" width="32" height="32" viewBox="0 0 32 32"><g fill="none" stroke="#000" stroke-width="4"><circle cx="16" cy="16" r="14"/><circle cx="16" cy="13" r="4.9" stroke-width="3.8"/><path d="M8 25.8Q16 18.6 24 25.8" stroke-width="3.8"/></g></svg>
<div class="t " style="margin-left:-640px;margin-top:-732px;left:752.0px;top:1394.11px;font-size:23.5px;line-height:23.5px;font-weight:700;color:#252f42;">adki31</div>
<div class="t " style="margin-left:-640px;margin-top:-732px;left:914.5px;top:1394.11px;font-size:23.5px;line-height:23.5px;color:#252f42;">Kim Adiman</div>
<div class="t " style="margin-left:-640px;margin-top:-732px;left:1152.5px;top:1394.11px;font-size:23.5px;line-height:23.5px;color:#252f42;">Generic</div>
<div class="t " style="margin-left:-640px;margin-top:-732px;left:1336.5px;top:1394.11px;font-size:23.5px;line-height:23.5px;color:#252f42;">All users, Read Only users, Restricted Ac…</div>
<div class="t " style="margin-left:-640px;margin-top:-732px;left:1824.5px;top:1394.11px;font-size:23.5px;line-height:23.5px;color:#252f42;">adki31@gmail.com</div>
<div class="t " style="margin-left:-640px;margin-top:-732px;left:2366.5px;top:1394.11px;font-size:23.5px;line-height:23.5px;font-weight:700;color:#252f42;">External</div>
<div class="t " style="margin-left:-640px;margin-top:-732px;left:2754.5px;top:1394.11px;font-size:23.5px;line-height:23.5px;color:#252f42;">2019-06-26 10:48:50</div>
<div class="t " style="margin-left:-640px;margin-top:-732px;left:3008.5px;top:1394.11px;font-size:23.5px;line-height:23.5px;color:#252f42;">2019-06-26 10:58:51</div>
<div class="t " style="margin-left:-640px;margin-top:-732px;left:3262.5px;top:1394.11px;font-size:23.5px;line-height:23.5px;color:#252f42;">0</div>
<div class="t " style="margin-left:-640px;margin-top:-732px;left:3488.5px;top:1394.11px;font-size:23.5px;line-height:23.5px;color:#252f42;">0</div>
<svg class="r" style="margin-left:-640px;margin-top:-732px;left:704px;top:1452px" width="32" height="32" viewBox="0 0 32 32"><g fill="none" stroke="#000" stroke-width="4"><circle cx="16" cy="16" r="14"/><circle cx="16" cy="13" r="4.9" stroke-width="3.8"/><path d="M8 25.8Q16 18.6 24 25.8" stroke-width="3.8"/></g></svg>
<div class="t " style="margin-left:-640px;margin-top:-732px;left:752.0px;top:1458.11px;font-size:23.5px;line-height:23.5px;font-weight:700;color:#252f42;">adklund93</div>
<div class="t " style="margin-left:-640px;margin-top:-732px;left:914.5px;top:1458.11px;font-size:23.5px;line-height:23.5px;color:#252f42;">Max Lundgren</div>
<div class="t " style="margin-left:-640px;margin-top:-732px;left:1152.5px;top:1458.11px;font-size:23.5px;line-height:23.5px;color:#252f42;">Development</div>
<div class="t " style="margin-left:-640px;margin-top:-732px;left:1336.5px;top:1458.11px;font-size:23.5px;line-height:23.5px;color:#252f42;">All users, Read Only users, Restricted Ac…</div>
<div class="t " style="margin-left:-640px;margin-top:-732px;left:1824.5px;top:1458.11px;font-size:23.5px;line-height:23.5px;color:#252f42;">lundgren93@gmail.com</div>
<div class="t " style="margin-left:-640px;margin-top:-732px;left:2366.5px;top:1458.11px;font-size:23.5px;line-height:23.5px;font-weight:700;color:#252f42;">External</div>
<div class="t " style="margin-left:-640px;margin-top:-732px;left:3262.5px;top:1458.11px;font-size:23.5px;line-height:23.5px;color:#252f42;">0</div>
<div class="t " style="margin-left:-640px;margin-top:-732px;left:3488.5px;top:1458.11px;font-size:23.5px;line-height:23.5px;color:#252f42;">0</div>
<svg class="r" style="margin-left:-640px;margin-top:-732px;left:704px;top:1516px" width="32" height="32" viewBox="0 0 32 32"><g fill="none" stroke="#000" stroke-width="4"><circle cx="16" cy="16" r="14"/><circle cx="16" cy="13" r="4.9" stroke-width="3.8"/><path d="M8 25.8Q16 18.6 24 25.8" stroke-width="3.8"/></g></svg>
<div class="t " style="margin-left:-640px;margin-top:-732px;left:752.0px;top:1522.11px;font-size:23.5px;line-height:23.5px;font-weight:700;color:#252f42;">adllust85</div>
<div class="t " style="margin-left:-640px;margin-top:-732px;left:914.5px;top:1522.11px;font-size:23.5px;line-height:23.5px;color:#252f42;">Nadia Hassan</div>
<div class="t " style="margin-left:-640px;margin-top:-732px;left:1152.5px;top:1522.11px;font-size:23.5px;line-height:23.5px;color:#252f42;">Development</div>
<div class="t " style="margin-left:-640px;margin-top:-732px;left:1336.5px;top:1522.11px;font-size:23.5px;line-height:23.5px;color:#252f42;">All users, Read Only users, Restricted Ac…</div>
<div class="t " style="margin-left:-640px;margin-top:-732px;left:1824.5px;top:1522.11px;font-size:23.5px;line-height:23.5px;color:#252f42;">nadian@hassansoft.com</div>
<div class="t " style="margin-left:-640px;margin-top:-732px;left:2366.5px;top:1522.11px;font-size:23.5px;line-height:23.5px;font-weight:700;color:#252f42;">External</div>
<div class="t " style="margin-left:-640px;margin-top:-732px;left:3262.5px;top:1522.11px;font-size:23.5px;line-height:23.5px;color:#252f42;">0</div>
<div class="t " style="margin-left:-640px;margin-top:-732px;left:3488.5px;top:1522.11px;font-size:23.5px;line-height:23.5px;color:#252f42;">0</div>
<svg class="r" style="margin-left:-640px;margin-top:-732px;left:704px;top:1580px" width="32" height="32" viewBox="0 0 32 32"><g fill="none" stroke="#000" stroke-width="4"><circle cx="16" cy="16" r="14"/><circle cx="16" cy="13" r="4.9" stroke-width="3.8"/><path d="M8 25.8Q16 18.6 24 25.8" stroke-width="3.8"/></g></svg>
<div class="t " style="margin-left:-640px;margin-top:-732px;left:752.0px;top:1586.11px;font-size:23.5px;line-height:23.5px;font-weight:700;color:#252f42;">adlsson93</div>
<div class="t " style="margin-left:-640px;margin-top:-732px;left:914.5px;top:1586.11px;font-size:23.5px;line-height:23.5px;color:#252f42;">Lomax Carhard</div>
<div class="t " style="margin-left:-640px;margin-top:-732px;left:1152.5px;top:1586.11px;font-size:23.5px;line-height:23.5px;color:#252f42;">Generic</div>
<div class="t " style="margin-left:-640px;margin-top:-732px;left:1336.5px;top:1586.11px;font-size:23.5px;line-height:23.5px;color:#252f42;">All users, Read Only users, Restricted Ac…</div>
<div class="t " style="margin-left:-640px;margin-top:-732px;left:1824.5px;top:1586.11px;font-size:23.5px;line-height:23.5px;color:#252f42;">loxca@acme.com</div>
<div class="t " style="margin-left:-640px;margin-top:-732px;left:2366.5px;top:1586.11px;font-size:23.5px;line-height:23.5px;font-weight:700;color:#252f42;">External</div>
<div class="t " style="margin-left:-640px;margin-top:-732px;left:3262.5px;top:1586.11px;font-size:23.5px;line-height:23.5px;color:#252f42;">0</div>
<div class="t " style="margin-left:-640px;margin-top:-732px;left:3488.5px;top:1586.11px;font-size:23.5px;line-height:23.5px;color:#252f42;">0</div>
<svg class="r" style="margin-left:-640px;margin-top:-732px;left:704px;top:1644px" width="32" height="32" viewBox="0 0 32 32"><g fill="none" stroke="#000" stroke-width="4"><circle cx="16" cy="16" r="14"/><circle cx="16" cy="13" r="4.9" stroke-width="3.8"/><path d="M8 25.8Q16 18.6 24 25.8" stroke-width="3.8"/></g></svg>
<div class="t " style="margin-left:-640px;margin-top:-732px;left:752.0px;top:1650.11px;font-size:23.5px;line-height:23.5px;font-weight:700;color:#252f42;">admmel20</div>
<div class="t " style="margin-left:-640px;margin-top:-732px;left:914.5px;top:1650.11px;font-size:23.5px;line-height:23.5px;color:#252f42;">Manny Melora</div>
<div class="t " style="margin-left:-640px;margin-top:-732px;left:1152.5px;top:1650.11px;font-size:23.5px;line-height:23.5px;color:#252f42;">Development</div>
<div class="t " style="margin-left:-640px;margin-top:-732px;left:1336.5px;top:1650.11px;font-size:23.5px;line-height:23.5px;color:#252f42;">All users, Read Only users, Restricted Ac…</div>
<div class="t " style="margin-left:-640px;margin-top:-732px;left:1824.5px;top:1650.11px;font-size:23.5px;line-height:23.5px;color:#252f42;">mmel20@cybergrunt.com</div>
<div class="t " style="margin-left:-640px;margin-top:-732px;left:2366.5px;top:1650.11px;font-size:23.5px;line-height:23.5px;font-weight:700;color:#252f42;">External</div>
<div class="t " style="margin-left:-640px;margin-top:-732px;left:3262.5px;top:1650.11px;font-size:23.5px;line-height:23.5px;color:#252f42;">0</div>
<div class="t " style="margin-left:-640px;margin-top:-732px;left:3488.5px;top:1650.11px;font-size:23.5px;line-height:23.5px;color:#252f42;">0</div>
<svg class="r" style="margin-left:-640px;margin-top:-732px;left:704px;top:1708px" width="32" height="32" viewBox="0 0 32 32"><g fill="none" stroke="#000" stroke-width="4"><circle cx="16" cy="16" r="14"/><circle cx="16" cy="13" r="4.9" stroke-width="3.8"/><path d="M8 25.8Q16 18.6 24 25.8" stroke-width="3.8"/></g></svg>
<div class="t " style="margin-left:-640px;margin-top:-732px;left:752.0px;top:1714.11px;font-size:23.5px;line-height:23.5px;font-weight:700;color:#252f42;">adndstr38</div>
<div class="t " style="margin-left:-640px;margin-top:-732px;left:914.5px;top:1714.11px;font-size:23.5px;line-height:23.5px;color:#252f42;">Neville Defleur</div>
<div class="t " style="margin-left:-640px;margin-top:-732px;left:1152.5px;top:1714.11px;font-size:23.5px;line-height:23.5px;color:#252f42;">Development</div>
<div class="t " style="margin-left:-640px;margin-top:-732px;left:1336.5px;top:1714.11px;font-size:23.5px;line-height:23.5px;color:#252f42;">All users, Read Only users, Restricted Ac…</div>
<div class="t " style="margin-left:-640px;margin-top:-732px;left:1824.5px;top:1714.11px;font-size:23.5px;line-height:23.5px;color:#252f42;">fleur2023@gmail.com</div>
<div class="t " style="margin-left:-640px;margin-top:-732px;left:2366.5px;top:1714.11px;font-size:23.5px;line-height:23.5px;font-weight:700;color:#252f42;">External</div>
<div class="t " style="margin-left:-640px;margin-top:-732px;left:3262.5px;top:1714.11px;font-size:23.5px;line-height:23.5px;color:#252f42;">0</div>
<div class="t " style="margin-left:-640px;margin-top:-732px;left:3488.5px;top:1714.11px;font-size:23.5px;line-height:23.5px;color:#252f42;">0</div>
<svg class="r" style="margin-left:-640px;margin-top:-732px;left:704px;top:1772px" width="32" height="32" viewBox="0 0 32 32"><g fill="none" stroke="#000" stroke-width="4"><circle cx="16" cy="16" r="14"/><circle cx="16" cy="13" r="4.9" stroke-width="3.8"/><path d="M8 25.8Q16 18.6 24 25.8" stroke-width="3.8"/></g></svg>
<div class="t " style="margin-left:-640px;margin-top:-732px;left:752.0px;top:1778.11px;font-size:23.5px;line-height:23.5px;font-weight:700;color:#252f42;">adomqv…</div>
<div class="t " style="margin-left:-640px;margin-top:-732px;left:914.5px;top:1778.11px;font-size:23.5px;line-height:23.5px;color:#252f42;">David Crosby</div>
<div class="t " style="margin-left:-640px;margin-top:-732px;left:1152.5px;top:1778.11px;font-size:23.5px;line-height:23.5px;color:#252f42;">Development</div>
<div class="t " style="margin-left:-640px;margin-top:-732px;left:1336.5px;top:1778.11px;font-size:23.5px;line-height:23.5px;color:#252f42;">All users, Restricted Access</div>
<div class="t " style="margin-left:-640px;margin-top:-732px;left:1824.5px;top:1778.11px;font-size:23.5px;line-height:23.5px;color:#252f42;">thecroz@forgottenname.com</div>
<div class="t " style="margin-left:-640px;margin-top:-732px;left:2366.5px;top:1778.11px;font-size:23.5px;line-height:23.5px;font-weight:700;color:#252f42;">External</div>
<div class="t " style="margin-left:-640px;margin-top:-732px;left:2754.5px;top:1778.11px;font-size:23.5px;line-height:23.5px;color:#252f42;">2020-01-09 13:48:11</div>
<div class="t " style="margin-left:-640px;margin-top:-732px;left:3008.5px;top:1778.11px;font-size:23.5px;line-height:23.5px;color:#252f42;">2020-01-09 15:52:50</div>
<div class="t " style="margin-left:-640px;margin-top:-732px;left:3262.5px;top:1778.11px;font-size:23.5px;line-height:23.5px;color:#252f42;">0</div>
<div class="t " style="margin-left:-640px;margin-top:-732px;left:3488.5px;top:1778.11px;font-size:23.5px;line-height:23.5px;color:#252f42;">0</div>
<svg class="r" style="margin-left:-640px;margin-top:-732px;left:704px;top:1836px" width="32" height="32" viewBox="0 0 32 32"><g fill="none" stroke="#000" stroke-width="4"><circle cx="16" cy="16" r="14"/><circle cx="16" cy="13" r="4.9" stroke-width="3.8"/><path d="M8 25.8Q16 18.6 24 25.8" stroke-width="3.8"/></g></svg>
<div class="t " style="margin-left:-640px;margin-top:-732px;left:752.0px;top:1842.11px;font-size:23.5px;line-height:23.5px;font-weight:700;color:#252f42;">adörklu10</div>
<div class="t " style="margin-left:-640px;margin-top:-732px;left:914.5px;top:1842.11px;font-size:23.5px;line-height:23.5px;color:#252f42;">Xiang Chen</div>
<div class="t " style="margin-left:-640px;margin-top:-732px;left:1152.5px;top:1842.11px;font-size:23.5px;line-height:23.5px;color:#252f42;">Development</div>
<div class="t " style="margin-left:-640px;margin-top:-732px;left:1336.5px;top:1842.11px;font-size:23.5px;line-height:23.5px;color:#252f42;">All users, Read Only users, Restricted Ac…</div>
<div class="t " style="margin-left:-640px;margin-top:-732px;left:1824.5px;top:1842.11px;font-size:23.5px;line-height:23.5px;color:#252f42;">chen_91821@fortress.com</div>
<div class="t " style="margin-left:-640px;margin-top:-732px;left:2366.5px;top:1842.11px;font-size:23.5px;line-height:23.5px;font-weight:700;color:#252f42;">External</div>
<div class="t " style="margin-left:-640px;margin-top:-732px;left:3262.5px;top:1842.11px;font-size:23.5px;line-height:23.5px;color:#252f42;">0</div>
<div class="t " style="margin-left:-640px;margin-top:-732px;left:3488.5px;top:1842.11px;font-size:23.5px;line-height:23.5px;color:#252f42;">0</div>
<svg class="r" style="margin-left:-640px;margin-top:-732px;left:704px;top:1900px" width="32" height="32" viewBox="0 0 32 32"><g fill="none" stroke="#000" stroke-width="4"><circle cx="16" cy="16" r="14"/><circle cx="16" cy="13" r="4.9" stroke-width="3.8"/><path d="M8 25.8Q16 18.6 24 25.8" stroke-width="3.8"/></g></svg>
<div class="t " style="margin-left:-640px;margin-top:-732px;left:752.0px;top:1906.11px;font-size:23.5px;line-height:23.5px;font-weight:700;color:#252f42;">adpa93</div>
<div class="t " style="margin-left:-640px;margin-top:-732px;left:914.5px;top:1906.11px;font-size:23.5px;line-height:23.5px;color:#252f42;">Pal Schal</div>
<div class="t " style="margin-left:-640px;margin-top:-732px;left:1152.5px;top:1906.11px;font-size:23.5px;line-height:23.5px;color:#252f42;">Development</div>
<div class="t " style="margin-left:-640px;margin-top:-732px;left:1336.5px;top:1906.11px;font-size:23.5px;line-height:23.5px;color:#252f42;">All users, Read Only users, Restricted Ac…</div>
<div class="t " style="margin-left:-640px;margin-top:-732px;left:1824.5px;top:1906.11px;font-size:23.5px;line-height:23.5px;color:#252f42;">palle123@aol.com</div>
<div class="t " style="margin-left:-640px;margin-top:-732px;left:2366.5px;top:1906.11px;font-size:23.5px;line-height:23.5px;font-weight:700;color:#252f42;">External</div>
<div class="t " style="margin-left:-640px;margin-top:-732px;left:3262.5px;top:1906.11px;font-size:23.5px;line-height:23.5px;color:#252f42;">0</div>
<div class="t " style="margin-left:-640px;margin-top:-732px;left:3488.5px;top:1906.11px;font-size:23.5px;line-height:23.5px;color:#252f42;">0</div>
<svg class="r" style="margin-left:-640px;margin-top:-732px;left:704px;top:1964px" width="32" height="32" viewBox="0 0 32 32"><g fill="none" stroke="#000" stroke-width="4"><circle cx="16" cy="16" r="14"/><circle cx="16" cy="13" r="4.9" stroke-width="3.8"/><path d="M8 25.8Q16 18.6 24 25.8" stroke-width="3.8"/></g></svg>
<div class="t " style="margin-left:-640px;margin-top:-732px;left:752.0px;top:1970.11px;font-size:23.5px;line-height:23.5px;font-weight:700;color:#252f42;">adrdstr39</div>
<div class="t " style="margin-left:-640px;margin-top:-732px;left:914.5px;top:1970.11px;font-size:23.5px;line-height:23.5px;color:#252f42;">Dragan Sorowitz</div>
<div class="t " style="margin-left:-640px;margin-top:-732px;left:1152.5px;top:1970.11px;font-size:23.5px;line-height:23.5px;color:#252f42;">Development</div>
<div class="t " style="margin-left:-640px;margin-top:-732px;left:1336.5px;top:1970.11px;font-size:23.5px;line-height:23.5px;color:#252f42;">All users, Read Only users, Restricted Ac…</div>
<div class="t " style="margin-left:-640px;margin-top:-732px;left:1824.5px;top:1970.11px;font-size:23.5px;line-height:23.5px;color:#252f42;">drgnsor7@gmail.com</div>
<div class="t " style="margin-left:-640px;margin-top:-732px;left:2366.5px;top:1970.11px;font-size:23.5px;line-height:23.5px;font-weight:700;color:#252f42;">External</div>
<div class="t " style="margin-left:-640px;margin-top:-732px;left:3262.5px;top:1970.11px;font-size:23.5px;line-height:23.5px;color:#252f42;">0</div>
<div class="t " style="margin-left:-640px;margin-top:-732px;left:3488.5px;top:1970.11px;font-size:23.5px;line-height:23.5px;color:#252f42;">0</div>
<svg class="r" style="margin-left:-640px;margin-top:-732px;left:704px;top:2028px" width="32" height="32" viewBox="0 0 32 32"><g fill="none" stroke="#000" stroke-width="4"><circle cx="16" cy="16" r="14"/><circle cx="16" cy="13" r="4.9" stroke-width="3.8"/><path d="M8 25.8Q16 18.6 24 25.8" stroke-width="3.8"/></g></svg>
<div class="t " style="margin-left:-640px;margin-top:-732px;left:752.0px;top:2034.11px;font-size:23.5px;line-height:23.5px;font-weight:700;color:#252f42;">adrggre53</div>
<div class="t " style="margin-left:-640px;margin-top:-732px;left:914.5px;top:2034.11px;font-size:23.5px;line-height:23.5px;color:#252f42;">Reginald Van Hauter</div>
<div class="t " style="margin-left:-640px;margin-top:-732px;left:1152.5px;top:2034.11px;font-size:23.5px;line-height:23.5px;color:#252f42;">Development</div>
<div class="t " style="margin-left:-640px;margin-top:-732px;left:1336.5px;top:2034.11px;font-size:23.5px;line-height:23.5px;color:#252f42;">All users, Premium Users, Read Only us…</div>
<div class="t " style="margin-left:-640px;margin-top:-732px;left:1824.5px;top:2034.11px;font-size:23.5px;line-height:23.5px;color:#252f42;">vanhauten67@acme.com</div>
<div class="t " style="margin-left:-640px;margin-top:-732px;left:2366.5px;top:2034.11px;font-size:23.5px;line-height:23.5px;font-weight:700;color:#252f42;">External</div>
<div class="t " style="margin-left:-640px;margin-top:-732px;left:3262.5px;top:2034.11px;font-size:23.5px;line-height:23.5px;color:#252f42;">0</div>
<div class="t " style="margin-left:-640px;margin-top:-732px;left:3488.5px;top:2034.11px;font-size:23.5px;line-height:23.5px;color:#252f42;">0</div>
<svg class="r" style="margin-left:-640px;margin-top:-732px;left:704px;top:2092px" width="32" height="32" viewBox="0 0 32 32"><g fill="none" stroke="#000" stroke-width="4"><circle cx="16" cy="16" r="14"/><circle cx="16" cy="13" r="4.9" stroke-width="3.8"/><path d="M8 25.8Q16 18.6 24 25.8" stroke-width="3.8"/></g></svg>
<div class="t " style="margin-left:-640px;margin-top:-732px;left:752.0px;top:2098.11px;font-size:23.5px;line-height:23.5px;font-weight:700;color:#252f42;">adrsson31</div>
<div class="t " style="margin-left:-640px;margin-top:-732px;left:914.5px;top:2098.11px;font-size:23.5px;line-height:23.5px;color:#252f42;">Roseanna Pearson</div>
<div class="t " style="margin-left:-640px;margin-top:-732px;left:1152.5px;top:2098.11px;font-size:23.5px;line-height:23.5px;color:#252f42;">Development</div>
<div class="t " style="margin-left:-640px;margin-top:-732px;left:1336.5px;top:2098.11px;font-size:23.5px;line-height:23.5px;color:#252f42;">All users, Read Only users, Restricted Ac…</div>
<div class="t " style="margin-left:-640px;margin-top:-732px;left:1824.5px;top:2098.11px;font-size:23.5px;line-height:23.5px;color:#252f42;">rhubarb99@yahoo.com</div>
<div class="t " style="margin-left:-640px;margin-top:-732px;left:2366.5px;top:2098.11px;font-size:23.5px;line-height:23.5px;font-weight:700;color:#252f42;">External</div>
<div class="t " style="margin-left:-640px;margin-top:-732px;left:3262.5px;top:2098.11px;font-size:23.5px;line-height:23.5px;color:#252f42;">0</div>
<div class="t " style="margin-left:-640px;margin-top:-732px;left:3488.5px;top:2098.11px;font-size:23.5px;line-height:23.5px;color:#252f42;">0</div>
</div>
<div class="r" style="left:0;top:0;width:1px;height:2162px;background:rgba(255,255,255,0.14)"></div>
</div>
</body></html>
